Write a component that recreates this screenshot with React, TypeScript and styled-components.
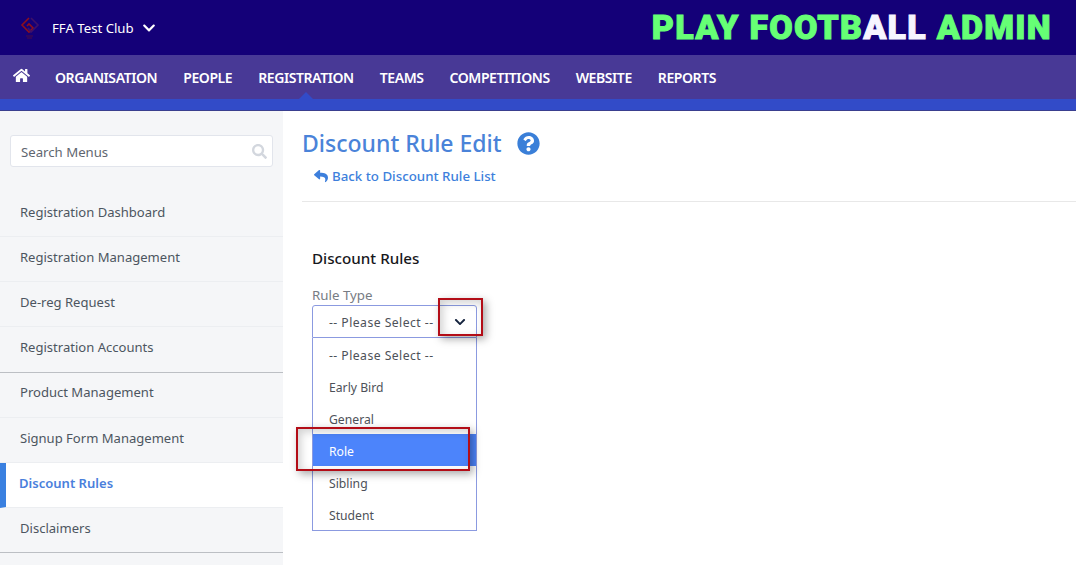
import React from 'react'
import styled, { createGlobalStyle } from 'styled-components'
import { FaHome, FaSearch, FaQuestionCircle, FaReply, FaChevronDown } from 'react-icons/fa'

const GlobalStyle = createGlobalStyle`
  html, body {
    margin: 0;
    padding: 0;
    height: 565px;
    overflow: hidden;
    background: #fff;
    font-family: 'Noto Sans', 'Open Sans', sans-serif;
  }
  * { box-sizing: border-box; }
`

const TopBar = styled.header`
  height: 55px;
  background: #140078;
  display: flex;
  align-items: center;
  justify-content: space-between;
  padding: 0 24px 0 20px;
`

const Club = styled.div`
  display: flex;
  align-items: center;
  color: #fff;
  font-size: 13.2px;
`

const ClubName = styled.span`
  margin-left: 12px;
  margin-right: 8px;
`

const Brand = styled.div`
  font-family: Roboto, sans-serif;
  font-weight: 900;
  font-size: 34px;
  letter-spacing: 1.25px;
  line-height: 53px;
  color: #66ff75;
  -webkit-text-stroke: 1px currentColor;
  white-space: nowrap;

  span {
    color: #f7f5ff;
  }
`

const NavBar = styled.nav`
  height: 44px;
  background: #483996;
  display: flex;
  align-items: center;
  padding: 0 0 0 13px;
  color: #fff;
`

const HomeLink = styled.div`
  display: flex;
  margin-right: 25px;
  margin-top: -4px;
`

const NavItem = styled.div<{ $active?: boolean }>`
  position: relative;
  height: 44px;
  line-height: 46px;
  margin-right: 26px;
  font-size: 14px;
  font-weight: 600;
  letter-spacing: -0.42px;

  ${(p) =>
    p.$active &&
    `
    &::after {
      content: '';
      position: absolute;
      left: 50%;
      bottom: 0;
      margin-left: -7px;
      border-left: 7px solid transparent;
      border-right: 7px solid transparent;
      border-bottom: 7px solid #324bc8;
    }
  `}
`

const BlueBar = styled.div`
  height: 12px;
  background: #324bc8;
  border-bottom: 1px solid #3a3f8f;
`

const Body = styled.div`
  display: flex;
  height: 454px;
  overflow: hidden;
`

const Sidebar = styled.aside`
  width: 283px;
  flex: none;
  background: #f5f6f8;
  padding-top: 24px;
`

const SearchBox = styled.div`
  height: 32px;
  margin: 0 10px 24.8px;
  background: #fff;
  border: 1px solid #e2e5ec;
  border-radius: 3px;
  display: flex;
  align-items: center;
  justify-content: space-between;
  padding: 1px 5px 0 10px;
  font-size: 13.2px;
  color: #5f6670;
`

const MenuItem = styled.div<{ $active?: boolean; $end?: boolean }>`
  height: 45.2px;
  display: flex;
  align-items: center;
  padding-left: ${(p) => (p.$active ? '13px' : '20px')};
  padding-bottom: 4.5px;
  font-size: 13.05px;
  color: ${(p) => (p.$active ? '#4a7fdc' : '#4c5560')};
  font-weight: ${(p) => (p.$active ? 600 : 400)};
  background: ${(p) => (p.$active ? '#fff' : 'transparent')};
  border-left: ${(p) => (p.$active ? '6px solid #3a80e0' : 'none')};
  border-bottom: 1px solid ${(p) => (p.$end ? '#bcbfc4' : '#eceef1')};
`

const Main = styled.main`
  flex: 1;
  padding: 14px 0 0 19px;
`

const TitleRow = styled.div`
  display: flex;
  align-items: center;
  height: 36px;
`

const Title = styled.h1`
  margin: 0 15px 0 0;
  font-size: 23px;
  font-weight: 500;
  color: #4a83d9;
  line-height: 36px;
`

const BackLink = styled.div`
  display: flex;
  align-items: center;
  gap: 4px;
  height: 20px;
  margin: 5px 0 0 12px;
  font-size: 13.3px;
  font-weight: 500;
  color: #3d7fdc;
`

const Divider = styled.hr`
  margin: 15px 0 0;
  border: 0;
  border-top: 1px solid #e8e8e8;
`

const Form = styled.section`
  padding: 46px 0 0 10px;
`

const SectionTitle = styled.h2`
  margin: 0 0 18px;
  font-size: 15.2px;
  line-height: 20px;
  font-weight: 500;
  color: #17181c;
`

const Label = styled.label`
  display: block;
  font-size: 13.3px;
  line-height: 18px;
  color: #777c84;
  margin-bottom: 1px;
`

const SelectWrap = styled.div`
  position: relative;
  width: 165px;
`

const SelectBox = styled.div`
  position: relative;
  height: 33px;
  border: 1px solid #8b9ae0;
  border-radius: 3px 3px 0 0;
  background: #fff;
  display: flex;
  align-items: center;
  justify-content: space-between;
  padding: 1px 10px 0 16px;
  font-size: 12.2px;
  letter-spacing: 0.45px;
  color: #4d5158;
`

const OptionList = styled.ul`
  list-style: none;
  margin: 0;
  padding: 0;
  height: 193px;
  border: 1px solid #8b9ae0;
  border-top: 0;
  background: #fff;
`

const Option = styled.li<{ $selected?: boolean; $placeholder?: boolean }>`
  height: 32px;
  display: flex;
  align-items: center;
  padding: 3px 0 0 16px;
  font-size: 12.2px;
  letter-spacing: ${(p) => (p.$placeholder ? '0.45px' : '0')};
  color: ${(p) => (p.$selected ? '#fff' : '#4d5158')};
  background: ${(p) => (p.$selected ? '#4c84fb' : 'transparent')};
`

const Callout = styled.div<{ $x: number; $y: number; $w: number; $h: number }>`
  position: absolute;
  left: ${(p) => p.$x}px;
  top: ${(p) => p.$y}px;
  width: ${(p) => p.$w}px;
  height: ${(p) => p.$h}px;
  border: 2px solid #b30d17;
  box-shadow: 3px 3px 8px rgba(0, 0, 0, 0.34), inset 3px 3px 8px rgba(0, 0, 0, 0.18);
  pointer-events: none;
`

const menuItems = [
  { label: 'Registration Dashboard' },
  { label: 'Registration Management' },
  { label: 'De-reg Request' },
  { label: 'Registration Accounts', end: true },
  { label: 'Product Management' },
  { label: 'Signup Form Management' },
  { label: 'Discount Rules', active: true },
  { label: 'Disclaimers', end: true },
]

const navItems = ['ORGANISATION', 'PEOPLE', 'REGISTRATION', 'TEAMS', 'COMPETITIONS', 'WEBSITE', 'REPORTS']

const options = ['-- Please Select --', 'Early Bird', 'General', 'Role', 'Sibling', 'Student']

const ClubLogo = () => (
  <svg width="20" height="24" viewBox="0 0 20 24" fill="none">
    <path d="M9 2 L2 9 L9 16 L13 12 L9 8 L7 10" stroke="#8e0f1d" strokeWidth="1.6" />
    <path d="M11 2 L18 9 L11 16 L8 12" stroke="#3f1068" strokeWidth="1.6" />
    <path d="M6 20 H13 M7 22 H12" stroke="#4b0a45" strokeWidth="1.2" />
  </svg>
)

export default function App() {
  return (
    <>
      <GlobalStyle />
      <TopBar>
        <Club>
          <ClubLogo />
          <ClubName>FFA Test Club</ClubName>
          <FaChevronDown size={14} />
        </Club>
        <Brand>
          PLAY FOOTB<span>ALL</span> ADMIN
        </Brand>
      </TopBar>
      <NavBar>
        <HomeLink>
          <FaHome size={17} />
        </HomeLink>
        {navItems.map((item) => (
          <NavItem key={item} $active={item === 'REGISTRATION'}>
            {item}
          </NavItem>
        ))}
      </NavBar>
      <BlueBar />
      <Body>
        <Sidebar>
          <SearchBox>
            Search Menus
            <FaSearch size={15} color="#d3d7de" />
          </SearchBox>
          {menuItems.map((m) => (
            <MenuItem key={m.label} $active={m.active} $end={m.end}>
              {m.label}
            </MenuItem>
          ))}
        </Sidebar>
        <Main>
          <TitleRow>
            <Title>Discount Rule Edit</Title>
            <FaQuestionCircle size={23} color="#3a7fd8" />
          </TitleRow>
          <BackLink>
            <FaReply size={14} />
            Back to Discount Rule List
          </BackLink>
          <Divider />
          <Form>
            <SectionTitle>Discount Rules</SectionTitle>
            <Label>Rule Type</Label>
            <SelectWrap>
              <SelectBox>
                -- Please Select --
                <FaChevronDown size={12} color="#16243f" />
              </SelectBox>
              <OptionList>
                {options.map((o, i) => (
                  <Option key={o} $selected={o === 'Role'} $placeholder={i === 0}>
                    {o}
                  </Option>
                ))}
              </OptionList>
            </SelectWrap>
          </Form>
        </Main>
      </Body>
      <Callout $x={438} $y={298} $w={45} $h={38} />
      <Callout $x={296} $y={427} $w={174} $h={44} />
    </>
  )
}
